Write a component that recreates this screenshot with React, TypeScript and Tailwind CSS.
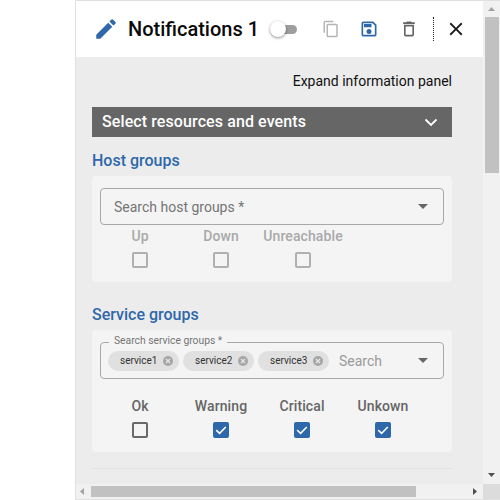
import React from "react";

const Check = ({ checked, disabled }: { checked?: boolean; disabled?: boolean }) =>
  checked ? (
    <span className="flex h-[16px] w-[16px] items-center justify-center rounded-[2px] bg-[#2e68aa]">
      <svg viewBox="0 0 16 16" className="h-[16px] w-[16px]">
        <path d="M3.2 8.2 6.6 11.4 12.8 5" fill="none" stroke="#fff" strokeWidth="1.6" />
      </svg>
    </span>
  ) : (
    <span
      className={
        "h-[16px] w-[16px] rounded-[2px] border-2 " +
        (disabled ? "border-[#b0b0b0]" : "border-[#696969]")
      }
    />
  );

const Col = ({
  label,
  width,
  checked,
  disabled,
}: {
  label: string;
  width: string;
  checked?: boolean;
  disabled?: boolean;
}) => (
  <div className={"flex flex-col items-center gap-[8px] " + width}>
    <span
      className={
        "text-[14px] font-medium leading-[16px] whitespace-nowrap tracking-[0.1px] " +
        (disabled ? "text-[#a9a9a9]" : "text-[#666666]")
      }
    >
      {label}
    </span>
    <Check checked={checked} disabled={disabled} />
  </div>
);

const Caret = () => (
  <svg viewBox="0 0 10 5" className="h-[5px] w-[10px] shrink-0">
    <path d="M0 0h10L5 5z" fill="#666666" />
  </svg>
);

const Chip = ({ label }: { label: string }) => (
  <span className="flex h-[20px] w-[71px] shrink-0 items-center justify-between rounded-[10px] bg-[#e0e0e0] pl-[12px] pr-[6px]">
    <span className="text-[10px] leading-none text-[#333333]">{label}</span>
    <svg viewBox="0 0 10 10" className="h-[10px] w-[10px]">
      <circle cx="5" cy="5" r="5" fill="#a6a6a6" />
      <path d="M3 3l4 4M7 3l-4 4" stroke="#e8e8e8" strokeWidth="1.2" />
    </svg>
  </span>
);

export default function App() {
  return (
    <div
      className="flex h-[500px] w-[500px] justify-end overflow-hidden bg-white"
      style={{ fontFamily: "Roboto, sans-serif" }}
    >
      <div className="flex h-[500px] w-[425px] flex-col rounded-tl-[2px] border-l border-t border-b border-[#e0e0e0] bg-[#ececec]">
        <div className="flex min-h-0 flex-1">
          <div className="flex min-w-0 flex-1 flex-col">
            {/* header */}
            <div className="flex h-[56px] shrink-0 items-center bg-white pl-[17px]">
              <svg viewBox="0 0 24 24" className="h-[26px] w-[26px] shrink-0 fill-[#2e68aa]">
                <path d="M3 17.25V21h3.75L17.81 9.94l-3.75-3.75L3 17.25zM20.71 7.04a1 1 0 0 0 0-1.41l-2.34-2.34a1 1 0 0 0-1.41 0l-1.83 1.83 3.75 3.75 1.83-1.83z" />
              </svg>
              <span className="ml-[9px] w-[130px] shrink-0 text-[20px] font-medium leading-none whitespace-nowrap text-[#0a0a0a]">
                Notifications 1
              </span>
              <div className="relative ml-[13px] h-[9px] w-[26px] shrink-0 rounded-full bg-[#9e9e9e]">
                <span className="absolute left-[-1px] top-[-4px] h-[16px] w-[16px] rounded-full bg-white shadow-[0_1px_3px_rgba(0,0,0,0.45)]" />
              </div>
              <svg viewBox="0 0 24 24" className="ml-[25px] h-[18px] w-[18px] shrink-0 fill-[#b5b5b5]">
                <path d="M15 1H4a2 2 0 0 0-2 2v14h2V3h11V1zm4 4H8a2 2 0 0 0-2 2v14a2 2 0 0 0 2 2h11a2 2 0 0 0 2-2V7a2 2 0 0 0-2-2zm0 16H8V7h11v14z" />
              </svg>
              <svg viewBox="0 0 24 24" className="ml-[19px] h-[20px] w-[20px] shrink-0 fill-[#2e68aa]">
                <path d="M17 3H5a2 2 0 0 0-2 2v14a2 2 0 0 0 2 2h14a2 2 0 0 0 2-2V7l-4-4zm2 16H5V5h11.170L19 7.830V19zm-7-7a3 3 0 1 0 0 6 3 3 0 0 0 0-6zM6 6h9v4H6V6z" />
              </svg>
              <svg viewBox="0 0 24 24" className="ml-[20px] h-[20px] w-[20px] shrink-0 fill-[#666666]">
                <path d="M6 19a2 2 0 0 0 2 2h8a2 2 0 0 0 2-2V7H6v12zM8 9h8v10H8V9zm7.500-5-1-1h-5l-1 1H5v2h14V4h-3.500z" />
              </svg>
              <div className="ml-[14px] h-[24px] w-0 shrink-0 border-l border-dotted border-[#222222]" />
              <svg viewBox="0 0 24 24" className="ml-[11px] h-[22px] w-[22px] shrink-0 fill-[#1a1a1a]">
                <path d="M19 6.410 17.590 5 12 10.590 6.410 5 5 6.410 10.590 12 5 17.590 6.410 19 12 13.410 17.590 19 19 17.590 13.410 12z" />
              </svg>
            </div>

            {/* content */}
            <div className="flex min-h-0 flex-1 flex-col overflow-hidden pl-[16px] pr-[31px]">
              <div className="mt-[16px] text-right text-[14px] leading-[16px] text-[#111111]">
                Expand information panel
              </div>
              <div className="mt-[18px] flex h-[30px] shrink-0 items-center justify-between bg-[#666666] pl-[10px] pr-[14px]">
                <span className="text-[16px] font-medium tracking-[0.1px] text-white">Select resources and events</span>
                <svg viewBox="0 0 14 9" className="h-[9px] w-[14px]">
                  <path d="M1.500 1.500 7 7l5.500-5.500" fill="none" stroke="#fff" strokeWidth="1.8" />
                </svg>
              </div>

              <h2 className="mt-[14px] text-[16px] font-medium leading-[19px] text-[#2e68aa]">Host groups</h2>
              <div className="mt-[6px] h-[106px] shrink-0 rounded-[4px] bg-[#f4f4f4] px-[8px] pt-[12px]">
                <div className="flex h-[37px] items-center justify-between rounded-[4px] border border-[#a8a8a8] pl-[13px] pr-[15px]">
                  <span className="pt-[2px] text-[14px] text-[#757575]">Search host groups *</span>
                  <Caret />
                </div>
                <div className="mt-[3px] flex">
                  <Col label="Up" width="w-[80px]" disabled />
                  <Col label="Down" width="w-[82px]" disabled />
                  <Col label="Unreachable" width="w-[82px]" disabled />
                </div>
              </div>

              <h2 className="mt-[23px] text-[16px] font-medium leading-[19px] text-[#2e68aa]">Service groups</h2>
              <div className="mt-[6px] h-[122px] shrink-0 rounded-[4px] bg-[#f4f4f4] px-[8px] pt-[12px]">
                <div className="relative flex h-[37px] items-center gap-[4px] rounded-[4px] border border-[#a8a8a8] pl-[7px] pr-[15px]">
                  <span className="absolute left-[8px] top-[-9px] bg-[#f4f4f4] px-[5px] text-[10.3px] leading-[14px] text-[#757575]">
                    Search service groups *
                  </span>
                  <Chip label="service1" />
                  <Chip label="service2" />
                  <Chip label="service3" />
                  <span className="ml-[6px] flex-1 pt-[2px] text-[14px] text-[#9a9a9a]">Search</span>
                  <Caret />
                </div>
                <div className="mt-[19px] flex">
                  <Col label="Ok" width="w-[80px]" />
                  <Col label="Warning" width="w-[82px]" checked />
                  <Col label="Critical" width="w-[80px]" checked />
                  <Col label="Unkown" width="w-[82px]" checked />
                </div>
              </div>
              <div className="mt-[16px] h-px shrink-0 bg-[#e2e2e2]" />
            </div>
          </div>

          {/* vertical scrollbar */}
          <div className="flex w-[17px] shrink-0 flex-col items-center bg-[#f1f1f1]">
            <svg viewBox="0 0 7 4" className="mt-[6px] h-[4px] w-[7px]">
              <path d="M0 4h7L3.500 0z" fill="#a3a3a3" />
            </svg>
            <div className="ml-[1px] mt-[6px] h-[156px] w-[14px] bg-[#c1c1c1]" />
            <div className="flex-1" />
            <svg viewBox="0 0 7 4" className="mb-[7px] h-[4px] w-[7px]">
              <path d="M0 0h7L3.500 4z" fill="#505050" />
            </svg>
          </div>
        </div>

        {/* horizontal scrollbar */}
        <div className="flex h-[15px] shrink-0 items-center bg-[#f1f1f1]">
          <svg viewBox="0 0 4 7" className="ml-[4px] h-[7px] w-[4px]">
            <path d="M4 0v7L0 3.500z" fill="#a3a3a3" />
          </svg>
          <div className="ml-[7px] h-[11px] w-[325px] bg-[#c1c1c1]" />
          <div className="flex-1" />
          <svg viewBox="0 0 4 7" className="mr-[6px] h-[7px] w-[4px]">
            <path d="M0 0v7L4 3.500z" fill="#505050" />
          </svg>
          <div className="h-[15px] w-[17px] bg-[#dcdcdc]" />
        </div>
      </div>
    </div>
  );
}
